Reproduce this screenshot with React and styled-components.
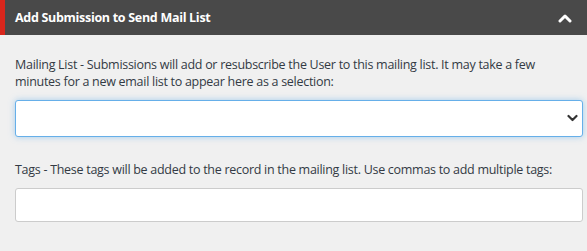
import React from "react";
import styled, { createGlobalStyle } from "styled-components";

const Global = createGlobalStyle`
  html, body { margin: 0; padding: 0; background: #f0f0f0; }
  body { font-family: "Open Sans", "Noto Sans", sans-serif; }
  * { box-sizing: border-box; }
`;

const Panel = styled.section`
  width: 587px;
  height: 251px;
  background: #f0f0f0;
`;

const Header = styled.header`
  height: 35px;
  background: #494949;
  border-left: 5px solid #d9261c;
  display: flex;
  align-items: center;
  justify-content: space-between;
  padding: 0 10px 0 10px;
`;

const Title = styled.h2`
  margin: 0;
  font-size: 12.5px;
  font-weight: 700;
  color: #ffffff;
  letter-spacing: -0.3px;
`;

const Body = styled.div`
  padding: 21px 5px 0 15px;
  display: flex;
  flex-direction: column;
`;

const Field = styled.div`
  display: flex;
  flex-direction: column;
  margin-bottom: ${(p) => p.$gap || 0}px;
`;

const Label = styled.label`
  font-size: 12.5px;
  letter-spacing: -0.28px;
  line-height: 17px;
  color: #333a44;
  width: 560px;
  margin-bottom: ${(p) => p.$mb}px;
`;

const SelectWrap = styled.div`
  position: relative;
  width: 568px;
  height: 37px;
`;

const Select = styled.select`
  appearance: none;
  width: 100%;
  height: 100%;
  background: #fff;
  border: 1px solid #66afe9;
  border-radius: 3px;
  box-shadow: 0 0 6px rgba(102, 175, 233, 0.55);
  outline: none;
  font-family: inherit;
  font-size: 13px;
`;

const Chevron = styled.svg`
  position: absolute;
  right: 5px;
  top: 14px;
  pointer-events: none;
`;

const Input = styled.input`
  width: 568px;
  height: 34px;
  background: #fff;
  border: 1px solid #cccccc;
  border-radius: 3px;
  outline: none;
  font-family: inherit;
  font-size: 13px;
`;

export default function App() {
  return (
    <>
      <Global />
      <Panel>
        <Header>
          <Title>Add Submission to Send Mail List</Title>
          <svg width="14" height="10" viewBox="0 0 14 10" style={{ marginRight: 5 }}>
            <path d="M2 8 L7 3 L12 8" fill="none" stroke="#fff" strokeWidth="3" strokeLinecap="round" strokeLinejoin="round" />
          </svg>
        </Header>
        <Body>
          <Field $gap={24}>
            <Label $mb={10}>
              Mailing List - Submissions will add or resubscribe the User to this mailing list. It may take a few
              minutes for a new email list to appear here as a selection:
            </Label>
            <SelectWrap>
              <Select defaultValue="">
                <option value=""></option>
              </Select>
              <Chevron width="11" height="8" viewBox="0 0 11 8">
                <path d="M1.5 2 L5.5 6 L9.5 2" fill="none" stroke="#333" strokeWidth="2.2" strokeLinecap="round" strokeLinejoin="round" />
              </Chevron>
            </SelectWrap>
          </Field>
          <Field>
            <Label $mb={10}>
              Tags - These tags will be added to the record in the mailing list. Use commas to add multiple tags:
            </Label>
            <Input type="text" />
          </Field>
        </Body>
      </Panel>
    </>
  );
}
